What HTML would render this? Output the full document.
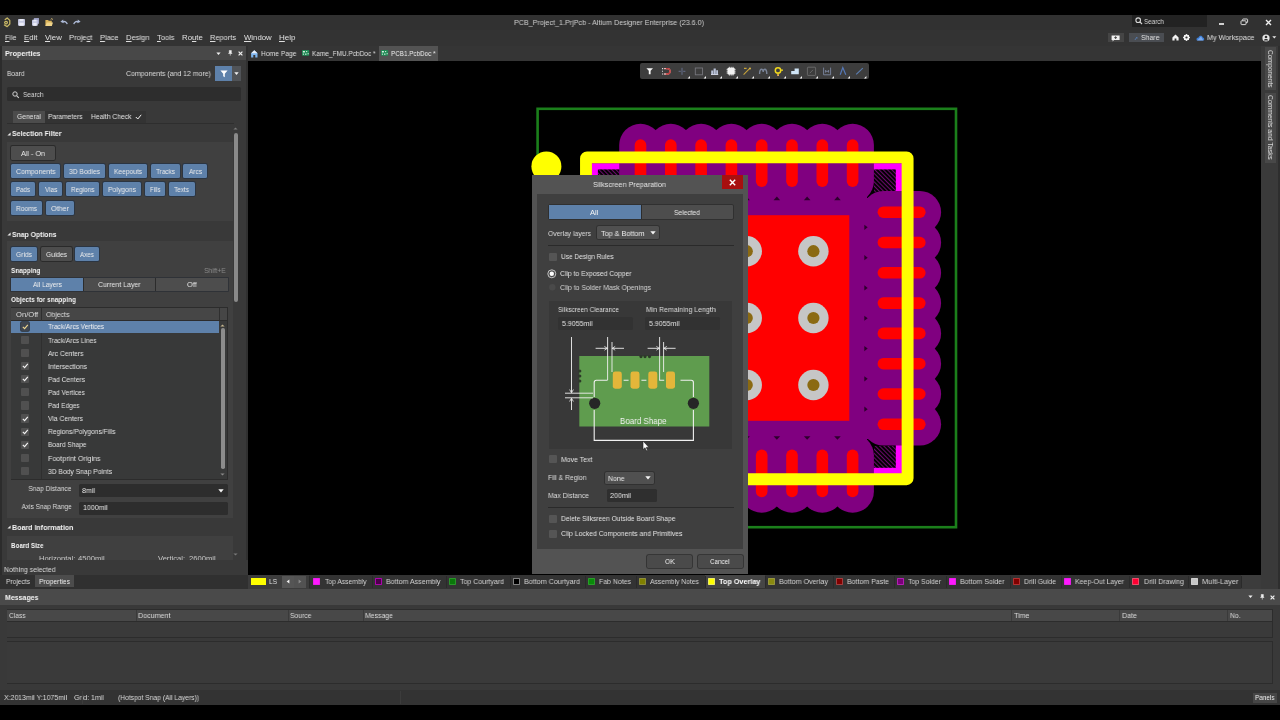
<!DOCTYPE html>
<html><head><meta charset="utf-8"><title>Altium Designer</title>
<style>
html,body{margin:0;padding:0;background:#000;}
body{width:1280px;height:720px;position:relative;overflow:hidden;font-family:"Liberation Sans", sans-serif;}
body>div,body>span,body>svg{position:absolute;display:block;}
.t{white-space:nowrap;line-height:12px;height:12px;will-change:transform;}
.t u{text-decoration-thickness:0.7px;text-underline-offset:0.8px;}
</style></head><body>
<div style="left:0px;top:15px;width:1280px;height:15px;background:#313131;"></div>
<div style="left:0px;top:30px;width:1280px;height:16px;background:#333333;"></div>
<div style="left:248px;top:46px;width:1032px;height:15px;background:#353535;"></div>
<div style="left:1261px;top:46px;width:19px;height:543px;background:#3a3a3a;"></div>
<div style="left:1278px;top:46px;width:2px;height:543px;background:#2e2e2e;"></div>
<div style="left:0px;top:46px;width:248px;height:14px;background:#484848;"></div>
<div style="left:0px;top:60px;width:248px;height:515px;background:#393939;"></div>
<div style="left:0px;top:46px;width:2px;height:529px;background:#2c2c2c;"></div>
<div style="left:245.8px;top:46px;width:2.7px;height:529px;background:#303030;"></div>
<div style="left:248px;top:574.5px;width:1013px;height:14.5px;background:#3c3c3c;"></div>
<div style="left:309px;top:575px;width:932px;height:14px;background:#333333;"></div>
<div style="left:0px;top:575px;width:248px;height:14px;background:#303030;"></div>
<div style="left:0px;top:589px;width:1280px;height:15.5px;background:#4a4a4a;"></div>
<div style="left:0px;top:605px;width:1280px;height:85px;background:#393939;"></div>
<div style="left:0px;top:690px;width:1280px;height:15px;background:#333333;"></div>
<span id="t1" class="t" style="left:514.00px;transform-origin:0 50%;top:16.90px;font-size:7.6px;color:#d0d0d0;transform:scaleX(0.9437);">PCB_Project_1.PrjPcb - Altium Designer Enterprise (23.6.0)</span>
<svg style="left:3px;top:16.5px;" width="9" height="11" viewBox="0 0 9 11"><path d="M2.2 2.6 L4.2 1 L6.8 3.4 V7 L4.2 9.6 L1.4 8 M1.6 5.6 C1.8 4 4.4 4 4.4 5.6 C4.4 7 2.4 7.2 2 6.2" fill="none" stroke="#c9b865" stroke-width="1.25" stroke-linejoin="round" stroke-linecap="round"/></svg>
<svg style="left:18px;top:18.5px;" width="7" height="7" viewBox="0 0 7 7"><rect x="0" y="0" width="7" height="6.8" rx="0.8" fill="#bfc2dc"/><rect x="1.5" y="0" width="4" height="2.2" fill="#e6e8f4"/><rect x="1.2" y="3.6" width="4.6" height="3.2" fill="#ecedf8"/></svg>
<svg style="left:32px;top:18px;" width="7.4" height="8" viewBox="0 0 7.4 8"><rect x="1.8" y="0" width="5.4" height="5.8" rx="0.7" fill="#9a9ec2"/><rect x="0" y="1.8" width="5.8" height="6" rx="0.7" fill="#c3c6e0"/><rect x="1.2" y="4.8" width="3.4" height="3" fill="#ecedf8"/><rect x="1.4" y="1.8" width="3" height="1.6" fill="#e6e8f4"/></svg>
<svg style="left:45px;top:17.5px;" width="9" height="8.4" viewBox="0 0 9 8.4"><path d="M0.4 2 H3 L3.8 2.8 H6.8 V8 H0.4 Z" fill="#d9b25a"/><path d="M0.5 8 L1.8 4.4 H8 L6.8 8 Z" fill="#f0d48a"/><path d="M5.6 1.6 L7 0.4 L7.6 1.8" fill="none" stroke="#e8c878" stroke-width="0.7"/></svg>
<svg style="left:59.5px;top:18.5px;" width="8" height="6" viewBox="0 0 8 6"><path d="M7.2 5.2 C6.8 2.8 4.6 2 2.8 2.8" fill="none" stroke="#aebbd8" stroke-width="1.3"/><path d="M0.4 2.8 L3.2 0.4 L3.6 4.2 Z" fill="#aebbd8"/></svg>
<svg style="left:73px;top:18.5px;" width="8" height="6" viewBox="0 0 8 6"><path d="M0.8 5.2 C1.2 2.8 3.4 2 5.2 2.8" fill="none" stroke="#aebbd8" stroke-width="1.3"/><path d="M7.6 2.8 L4.8 0.4 L4.4 4.2 Z" fill="#aebbd8"/></svg>
<div style="left:1132px;top:15px;width:75px;height:11.6px;background:#222222;"></div>
<svg style="left:1135px;top:17px;" width="8" height="8" viewBox="0 0 8 8"><circle cx="3.2" cy="3.2" r="2.3" fill="none" stroke="#d8d8d8" stroke-width="1.1"/><path d="M4.9 4.9 L7 7" stroke="#d8d8d8" stroke-width="1.2"/></svg>
<span id="t2" class="t" style="left:1143.5px;transform-origin:0 50%;top:15.80px;font-size:7.6px;color:#d8d8d8;transform:scaleX(0.8312);">Search</span>
<div style="left:1219px;top:23.2px;width:4.6px;height:1.6px;background:#d0d0d0;"></div>
<svg style="left:1240px;top:17.5px;" width="9" height="8" viewBox="0 0 9 8"><rect x="2.6" y="1" width="5" height="3.6" rx="0.6" fill="none" stroke="#d8d8d8" stroke-width="1"/><rect x="1" y="2.8" width="5" height="3.8" rx="0.6" fill="#2e2e2e" stroke="#d8d8d8" stroke-width="1"/></svg>
<svg style="left:1264.5px;top:18.5px;" width="7" height="7" viewBox="0 0 7 7"><path d="M1 1 L6 6 M6 1 L1 6" stroke="#f0f0f0" stroke-width="1.4"/></svg>
<span id="t3" class="t" style="left:5px;transform-origin:0 50%;top:32.00px;font-size:7.8px;color:#e0e0e0;transform:scaleX(0.9143);"><u>F</u>ile</span>
<span id="t4" class="t" style="left:24px;transform-origin:0 50%;top:32.00px;font-size:7.8px;color:#e0e0e0;"><u>E</u>dit</span>
<span id="t5" class="t" style="left:45px;transform-origin:0 50%;top:32.00px;font-size:7.8px;color:#e0e0e0;transform:scaleX(0.9842);"><u>V</u>iew</span>
<span id="t6" class="t" style="left:69px;transform-origin:0 50%;top:32.00px;font-size:7.8px;color:#e0e0e0;transform:scaleX(0.9678);">Proje<u>c</u>t</span>
<span id="t7" class="t" style="left:100px;transform-origin:0 50%;top:32.00px;font-size:7.8px;color:#e0e0e0;transform:scaleX(0.9480);"><u>P</u>lace</span>
<span id="t8" class="t" style="left:126px;transform-origin:0 50%;top:32.00px;font-size:7.8px;color:#e0e0e0;transform:scaleX(0.9678);"><u>D</u>esign</span>
<span id="t9" class="t" style="left:157px;transform-origin:0 50%;top:32.00px;font-size:7.8px;color:#e0e0e0;transform:scaleX(0.9605);"><u>T</u>ools</span>
<span id="t10" class="t" style="left:182px;transform-origin:0 50%;top:32.00px;font-size:7.8px;color:#e0e0e0;transform:scaleX(0.9842);">Ro<u>u</u>te</span>
<span id="t11" class="t" style="left:210px;transform-origin:0 50%;top:32.00px;font-size:7.8px;color:#e0e0e0;transform:scaleX(0.9519);"><u>R</u>eports</span>
<span id="t12" class="t" style="left:244px;transform-origin:0 50%;top:32.00px;font-size:7.8px;color:#e0e0e0;transform:scaleX(0.9915);"><u>W</u>indow</span>
<span id="t13" class="t" style="left:279px;transform-origin:0 50%;top:32.00px;font-size:7.8px;color:#e0e0e0;transform:scaleX(1.0282);"><u>H</u>elp</span>
<div style="left:1107.5px;top:33px;width:16.5px;height:9.2px;background:#454545;"></div>
<svg style="left:1111px;top:34.5px;" width="10" height="7" viewBox="0 0 10 7"><path d="M0.6 0.4 H8.6 V5 H3 L1.6 6.4 V5 H0.6 Z" fill="#f0f0f0"/><rect x="4.1" y="1.3" width="1" height="2.6" fill="#454545"/><rect x="3.2" y="2.2" width="2.8" height="0.9" fill="#454545"/></svg>
<div style="left:1129px;top:33px;width:35px;height:9.2px;background:#4a4d52;"></div>
<span id="t14" class="t" style="left:1133.5px;transform-origin:0 50%;top:31.80px;font-size:5px;color:#5b8fd6;">&#10138;</span>
<span id="t15" class="t" style="left:1140.5px;transform-origin:0 50%;top:32.00px;font-size:7.8px;color:#e0e0e0;transform:scaleX(0.8889);">Share</span>
<svg style="left:1171.5px;top:34px;" width="7" height="7" viewBox="0 0 7 7"><path d="M3.5 0.6 L6.6 3.4 V6.4 H4.4 V4.4 H2.6 V6.4 H0.4 V3.4 Z" fill="#f2f2f2"/></svg>
<svg style="left:1183px;top:34px;" width="7" height="7" viewBox="0 0 7 7"><circle cx="3.5" cy="3.5" r="2.1" fill="none" stroke="#f2f2f2" stroke-width="1.6"/><path d="M3.5 0 V7 M0 3.5 H7 M1 1 L6 6 M6 1 L1 6" stroke="#f2f2f2" stroke-width="0.9"/><circle cx="3.5" cy="3.5" r="1.1" fill="#323232"/></svg>
<svg style="left:1196px;top:33.5px;" width="9" height="8" viewBox="0 0 9 8"><path d="M1 6.6 C-0.2 5 1 3.4 2.6 3.6 C3 1.4 6.2 1.2 6.8 3.6 C8.6 3.8 8.6 6.4 7 6.6 Z" fill="#3d7fd9"/><path d="M1 6.6 L5 2.4 L7.4 6.6 Z" fill="#8fb8f0" opacity="0.8"/></svg>
<span id="t16" class="t" style="left:1206.8px;transform-origin:0 50%;top:32.00px;font-size:7.8px;color:#e0e0e0;transform:scaleX(0.9237);">My Workspace</span>
<svg style="left:1262px;top:33.5px;" width="8" height="8" viewBox="0 0 8 8"><circle cx="4" cy="4" r="3.6" fill="#e8e8e8"/><circle cx="4" cy="3" r="1.3" fill="#323232"/><path d="M1.8 6.4 C2.2 4.6 5.8 4.6 6.2 6.4 Z" fill="#323232"/></svg>
<svg style="left:1272px;top:36px;" width="5" height="3" viewBox="0 0 5 3"><path d="M0.3 0.3 H4.3 L2.3 2.6 Z" fill="#e8e8e8"/></svg>
<div style="left:379px;top:46px;width:59px;height:15px;background:#535353;"></div>
<svg style="left:251.2px;top:49.6px;" width="7" height="8" viewBox="0 0 7 8"><path d="M3.3 0.3 L6.5 3.2 V7.4 H4.3 V5 H2.3 V7.4 H0.1 V3.2 Z" fill="#7db4ee"/><path d="M3.3 0.3 L6.5 3.2 H0.1 Z" fill="#e8eef8"/></svg>
<span id="t17" class="t" style="left:261px;transform-origin:0 50%;top:47.80px;font-size:7.8px;color:#e0e0e0;transform:scaleX(0.8619);">Home Page</span>
<svg style="left:301.5px;top:50.4px;" width="8" height="7" viewBox="0 0 8 7"><rect x="0" y="0" width="7.2" height="5.8" rx="0.7" fill="#1f8a55"/><rect x="0.9" y="1" width="2" height="1.5" fill="#d8f0e2"/><rect x="4.1" y="1" width="1.1" height="1.1" fill="#d8f0e2"/><rect x="5.6" y="3.2" width="1.1" height="1.1" fill="#d8f0e2"/><rect x="0.9" y="3.6" width="1.1" height="1.1" fill="#d8f0e2"/><rect x="3" y="3.6" width="1.5" height="1.1" fill="#d8f0e2"/></svg>
<span id="t18" class="t" style="left:311.5px;transform-origin:0 50%;top:47.80px;font-size:7.8px;color:#e0e0e0;transform:scaleX(0.8326);">Kame_FMU.PcbDoc *</span>
<svg style="left:381px;top:50.4px;" width="8" height="7" viewBox="0 0 8 7"><rect x="0" y="0" width="7.2" height="5.8" rx="0.7" fill="#1f8a55"/><rect x="0.9" y="1" width="2" height="1.5" fill="#d8f0e2"/><rect x="4.1" y="1" width="1.1" height="1.1" fill="#d8f0e2"/><rect x="5.6" y="3.2" width="1.1" height="1.1" fill="#d8f0e2"/><rect x="0.9" y="3.6" width="1.1" height="1.1" fill="#d8f0e2"/><rect x="3" y="3.6" width="1.5" height="1.1" fill="#d8f0e2"/></svg>
<span id="t19" class="t" style="left:390.8px;transform-origin:0 50%;top:47.80px;font-size:7.8px;color:#f0f0f0;transform:scaleX(0.8084);">PCB1.PcbDoc *</span>
<div style="left:1265px;top:47px;width:11.3px;height:42.5px;background:#484848;"></div>
<div style="left:1265px;top:92.5px;width:11.3px;height:70px;background:#484848;"></div>
<span id="t20" class="t" style="left:1275.5px;top:49.5px;font-size:7.8px;color:#e0e0e0;transform-origin:0 0;transform:rotate(90deg) scaleX(0.8481);">Components</span>
<span id="t21" class="t" style="left:1275.5px;top:95px;font-size:7.8px;color:#e0e0e0;transform-origin:0 0;transform:rotate(90deg) scaleX(0.8620);">Comments and Tasks</span>
<span id="t22" class="t" style="left:5px;transform-origin:0 50%;top:47.60px;font-size:8px;color:#f2f2f2;font-weight:bold;transform:scaleX(0.8970);">Properties</span>
<svg style="left:216px;top:51.5px;" width="6" height="4" viewBox="0 0 6 4"><path d="M0.4 0.4 H4.6 L2.5 3 Z" fill="#f0f0f0"/></svg>
<svg style="left:228px;top:50.3px;" width="5" height="7" viewBox="0 0 5 7"><path d="M1.3 0.4 H3.3 V2.6 L4 3.4 H0.6 L1.3 2.6 Z M2.3 3.4 V5.6" fill="#f0f0f0" stroke="#f0f0f0" stroke-width="0.6"/></svg>
<svg style="left:237.5px;top:51px;" width="5" height="5" viewBox="0 0 5 5"><path d="M0.6 0.6 L4.4 4.4 M4.4 0.6 L0.6 4.4" stroke="#f0f0f0" stroke-width="1.2"/></svg>
<span id="t23" class="t" style="left:6.5px;transform-origin:0 50%;top:68.10px;font-size:7.6px;color:#dedede;transform:scaleX(0.8635);">Board</span>
<span id="t24" class="t" style="left:126px;transform-origin:0 50%;top:68.10px;font-size:7.6px;color:#dedede;transform:scaleX(0.9152);">Components (and 12 more)</span>
<div style="left:215px;top:66px;width:17px;height:15px;background:#5e81aa;"></div>
<div style="left:232px;top:66px;width:8.5px;height:15px;background:#505357;"></div>
<svg style="left:219.5px;top:69.5px;" width="8" height="8" viewBox="0 0 8 8"><path d="M0.4 0.6 H7.6 L4.8 3.8 V7.2 L3.2 6.2 V3.8 Z" fill="#ffffff"/></svg>
<svg style="left:234px;top:72px;" width="5" height="3.4" viewBox="0 0 5 3.4"><path d="M0.3 0.3 H4.7 L2.5 3 Z" fill="#f0f0f0"/></svg>
<div style="left:7px;top:87px;width:234px;height:14px;background:#2d2d2d;border-radius:1.5px;"></div>
<svg style="left:11.5px;top:90.5px;" width="8" height="8" viewBox="0 0 8 8"><circle cx="3" cy="3" r="2.2" fill="none" stroke="#d0d0d0" stroke-width="1"/><path d="M4.6 4.6 L6.8 6.8" stroke="#d0d0d0" stroke-width="1.1"/></svg>
<span id="t25" class="t" style="left:22.5px;transform-origin:0 50%;top:88.90px;font-size:7.6px;color:#d8d8d8;transform:scaleX(0.8519);">Search</span>
<div style="left:13px;top:110.5px;width:133px;height:12.5px;background:#333333;"></div>
<div style="left:13px;top:110.5px;width:31.5px;height:12.5px;background:#4c4c4c;"></div>
<span id="t26" class="t" style="left:16.5px;transform-origin:0 50%;top:111.40px;font-size:7.6px;color:#e4e4e4;transform:scaleX(0.8879);">General</span>
<span id="t27" class="t" style="left:48px;transform-origin:0 50%;top:111.40px;font-size:7.6px;color:#e4e4e4;transform:scaleX(0.8790);">Parameters</span>
<span id="t28" class="t" style="left:91px;transform-origin:0 50%;top:111.40px;font-size:7.6px;color:#e4e4e4;transform:scaleX(0.8883);">Health Check</span>
<svg style="left:134.5px;top:113.5px;" width="7" height="6" viewBox="0 0 7 6"><path d="M0.8 3 L2.8 5 L6.2 0.8" fill="none" stroke="#f0f0f0" stroke-width="1"/></svg>
<div style="left:7px;top:123px;width:227px;height:1px;background:#2e2e2e;"></div>
<div style="left:234px;top:133px;width:3.8px;height:169px;background:#8a8a8a;border-radius:2px;"></div>
<svg style="left:233.4px;top:127.2px;" width="5" height="3" viewBox="0 0 5 3"><path d="M0.4 2.6 L2.5 0.4 L4.6 2.6 Z" fill="#7a7a7a"/></svg>
<svg style="left:233.4px;top:552.5px;" width="5" height="3" viewBox="0 0 5 3"><path d="M0.4 0.4 L2.5 2.6 L4.6 0.4 Z" fill="#7a7a7a"/></svg>
<svg style="left:6.5px;top:131.6px;" width="4" height="4" viewBox="0 0 4 4"><path d="M3.6 0.4 V3.6 H0.4 Z" fill="#e8e8e8"/></svg>
<span id="t29" class="t" style="left:12px;transform-origin:0 50%;top:128.20px;font-size:7.8px;color:#f4f4f4;font-weight:bold;transform:scaleX(0.8854);">Selection Filter</span>
<div style="left:7px;top:142px;width:226px;height:78.5px;background:#404040;"></div>
<div style="left:11.1px;top:145.8px;width:43.6px;height:14.4px;background:#4d4d4d;border-radius:1.5px;box-shadow:0 0 0 0.9px #2a2a2a;"></div>
<span id="t30" class="t" style="left:21.00px;transform-origin:0 50%;top:147.80px;font-size:7.6px;color:#ececec;transform:scaleX(0.9476);">All - On</span>
<div style="left:11.1px;top:164.10000000000002px;width:49.1px;height:14.1px;background:#5e81aa;border-radius:1.5px;box-shadow:0 0 0 0.9px #2b3542;"></div>
<span id="t31" class="t" style="left:16.00px;transform-origin:0 50%;top:165.95px;font-size:7.6px;color:#ececec;transform:scaleX(0.9173);">Components</span>
<div style="left:63.6px;top:164.10000000000002px;width:41.6px;height:14.1px;background:#5e81aa;border-radius:1.5px;box-shadow:0 0 0 0.9px #2b3542;"></div>
<span id="t32" class="t" style="left:69.00px;transform-origin:0 50%;top:165.95px;font-size:7.6px;color:#ececec;transform:scaleX(0.8845);">3D Bodies</span>
<div style="left:108.6px;top:164.10000000000002px;width:38.6px;height:14.1px;background:#5e81aa;border-radius:1.5px;box-shadow:0 0 0 0.9px #2b3542;"></div>
<span id="t33" class="t" style="left:114.00px;transform-origin:0 50%;top:165.95px;font-size:7.6px;color:#ececec;transform:scaleX(0.8724);">Keepouts</span>
<div style="left:150.6px;top:164.10000000000002px;width:29.6px;height:14.1px;background:#5e81aa;border-radius:1.5px;box-shadow:0 0 0 0.9px #2b3542;"></div>
<span id="t34" class="t" style="left:156.00px;transform-origin:0 50%;top:165.95px;font-size:7.6px;color:#ececec;transform:scaleX(0.8444);">Tracks</span>
<div style="left:183.1px;top:164.10000000000002px;width:23.6px;height:14.1px;background:#5e81aa;border-radius:1.5px;box-shadow:0 0 0 0.9px #2b3542;"></div>
<span id="t35" class="t" style="left:188.50px;transform-origin:0 50%;top:165.95px;font-size:7.6px;color:#ececec;transform:scaleX(0.8560);">Arcs</span>
<div style="left:11.1px;top:182.4px;width:24.1px;height:14.1px;background:#5e81aa;border-radius:1.5px;box-shadow:0 0 0 0.9px #2b3542;"></div>
<span id="t36" class="t" style="left:16.25px;transform-origin:0 50%;top:184.25px;font-size:7.6px;color:#ececec;transform:scaleX(0.8087);">Pads</span>
<div style="left:39.1px;top:182.4px;width:23.1px;height:14.1px;background:#5e81aa;border-radius:1.5px;box-shadow:0 0 0 0.9px #2b3542;"></div>
<span id="t37" class="t" style="left:44.50px;transform-origin:0 50%;top:184.25px;font-size:7.6px;color:#ececec;transform:scaleX(0.8538);">Vias</span>
<div style="left:65.6px;top:182.4px;width:33.6px;height:14.1px;background:#5e81aa;border-radius:1.5px;box-shadow:0 0 0 0.9px #2b3542;"></div>
<span id="t38" class="t" style="left:70.75px;transform-origin:0 50%;top:184.25px;font-size:7.6px;color:#ececec;transform:scaleX(0.8430);">Regions</span>
<div style="left:102.6px;top:182.4px;width:38.6px;height:14.1px;background:#5e81aa;border-radius:1.5px;box-shadow:0 0 0 0.9px #2b3542;"></div>
<span id="t39" class="t" style="left:108.00px;transform-origin:0 50%;top:184.25px;font-size:7.6px;color:#ececec;transform:scaleX(0.8960);">Polygons</span>
<div style="left:144.6px;top:182.4px;width:20.6px;height:14.1px;background:#5e81aa;border-radius:1.5px;box-shadow:0 0 0 0.9px #2b3542;"></div>
<span id="t40" class="t" style="left:149.75px;transform-origin:0 50%;top:184.25px;font-size:7.6px;color:#ececec;transform:scaleX(0.7778);">Fills</span>
<div style="left:168.6px;top:182.4px;width:26.1px;height:14.1px;background:#5e81aa;border-radius:1.5px;box-shadow:0 0 0 0.9px #2b3542;"></div>
<span id="t41" class="t" style="left:174.25px;transform-origin:0 50%;top:184.25px;font-size:7.6px;color:#ececec;transform:scaleX(0.8458);">Texts</span>
<div style="left:11.1px;top:200.8px;width:31.1px;height:14.1px;background:#5e81aa;border-radius:1.5px;box-shadow:0 0 0 0.9px #2b3542;"></div>
<span id="t42" class="t" style="left:16.25px;transform-origin:0 50%;top:202.65px;font-size:7.6px;color:#ececec;transform:scaleX(0.8727);">Rooms</span>
<div style="left:45.6px;top:200.8px;width:28.6px;height:14.1px;background:#5e81aa;border-radius:1.5px;box-shadow:0 0 0 0.9px #2b3542;"></div>
<span id="t43" class="t" style="left:51.00px;transform-origin:0 50%;top:202.65px;font-size:7.6px;color:#ececec;transform:scaleX(0.9474);">Other</span>
<svg style="left:6.5px;top:232px;" width="4" height="4" viewBox="0 0 4 4"><path d="M3.6 0.4 V3.6 H0.4 Z" fill="#e8e8e8"/></svg>
<span id="t44" class="t" style="left:12px;transform-origin:0 50%;top:228.60px;font-size:7.8px;color:#f4f4f4;font-weight:bold;transform:scaleX(0.8779);">Snap Options</span>
<div style="left:7px;top:241px;width:226px;height:277px;background:#404040;"></div>
<div style="left:11.1px;top:247.10000000000002px;width:26.1px;height:14.1px;background:#5e81aa;border-radius:1.5px;box-shadow:0 0 0 0.9px #2b3542;"></div>
<span id="t45" class="t" style="left:16.25px;transform-origin:0 50%;top:248.95px;font-size:7.6px;color:#ececec;transform:scaleX(0.8812);">Grids</span>
<div style="left:40.6px;top:247.10000000000002px;width:31.1px;height:14.1px;background:#4d4d4d;border-radius:1.5px;box-shadow:0 0 0 0.9px #2a2a2a;"></div>
<span id="t46" class="t" style="left:45.75px;transform-origin:0 50%;top:248.95px;font-size:7.6px;color:#ececec;transform:scaleX(0.8727);">Guides</span>
<div style="left:75.1px;top:247.10000000000002px;width:24.1px;height:14.1px;background:#5e81aa;border-radius:1.5px;box-shadow:0 0 0 0.9px #2b3542;"></div>
<span id="t47" class="t" style="left:80.25px;transform-origin:0 50%;top:248.95px;font-size:7.6px;color:#ececec;transform:scaleX(0.8289);">Axes</span>
<span id="t48" class="t" style="left:10.5px;transform-origin:0 50%;top:264.90px;font-size:7.8px;color:#f4f4f4;font-weight:bold;transform:scaleX(0.8303);">Snapping</span>
<span id="t49" class="t" style="right:1054.2px;transform-origin:100% 50%;top:264.90px;font-size:7.6px;color:#8c8c8c;transform:scaleX(0.8703);">Shift+E</span>
<div style="left:11px;top:278px;width:216.5px;height:13.3px;background:#4d4d4d;box-shadow:0 0 0 0.8px #2c3036;"></div>
<div style="left:11px;top:278px;width:72px;height:13.3px;background:#5e81aa;"></div>
<div style="left:83px;top:278px;width:0.8px;height:13.3px;background:#2c2c2c;"></div>
<div style="left:155.3px;top:278px;width:0.8px;height:13.3px;background:#2c2c2c;"></div>
<span id="t50" class="t" style="left:32.50px;transform-origin:0 50%;top:279.40px;font-size:7.6px;color:#f0f0f0;transform:scaleX(0.8697);">All Layers</span>
<span id="t51" class="t" style="left:98.05px;transform-origin:0 50%;top:279.40px;font-size:7.6px;color:#e8e8e8;transform:scaleX(0.9152);">Current Layer</span>
<span id="t52" class="t" style="left:186.55px;transform-origin:0 50%;top:279.40px;font-size:7.6px;color:#e8e8e8;transform:scaleX(0.9500);">Off</span>
<span id="t53" class="t" style="left:10.5px;transform-origin:0 50%;top:294.30px;font-size:7.8px;color:#f4f4f4;font-weight:bold;transform:scaleX(0.8335);">Objects for snapping</span>
<div style="left:10.5px;top:307px;width:217px;height:172.8px;background:#2c2c2c;"></div>
<div style="left:11.3px;top:307.8px;width:215.4px;height:12.4px;background:#464646;"></div>
<div style="left:11.3px;top:320.8px;width:215.4px;height:158.2px;background:#383939;"></div>
<div style="left:41px;top:307.8px;width:0.8px;height:171.2px;background:#2f2f2f;"></div>
<div style="left:218.6px;top:307.8px;width:0.8px;height:12.4px;background:#2f2f2f;"></div>
<span id="t54" class="t" style="left:16px;transform-origin:0 50%;top:308.80px;font-size:7.6px;color:#dcdcdc;transform:scaleX(0.9895);">On/Off</span>
<span id="t55" class="t" style="left:46px;transform-origin:0 50%;top:308.80px;font-size:7.6px;color:#dcdcdc;transform:scaleX(0.9126);">Objects</span>
<div style="left:11.3px;top:320.8px;width:207.3px;height:12.4px;background:#5e81aa;"></div>
<div style="left:20.5px;top:322.2px;width:8.6px;height:8.8px;background:#3f4650;box-shadow:0 0 0 0.8px #2a3038;border-radius:1px;"></div>
<svg style="left:21.8px;top:323.8px;" width="7" height="6" viewBox="0 0 7 6"><path d="M0.8 2.8 L2.6 4.6 L5.8 0.8" fill="none" stroke="#f0d890" stroke-width="1.1"/></svg>
<span id="t56" class="t" style="left:48.3px;transform-origin:0 50%;top:321.40px;font-size:7.6px;color:#f4f4f4;transform:scaleX(0.8599);">Track/Arcs Vertices</span>
<div style="left:21px;top:335.72px;width:8px;height:8.2px;background:#505050;border-radius:1px;"></div>
<span id="t57" class="t" style="left:48.3px;transform-origin:0 50%;top:334.52px;font-size:7.6px;color:#e4e4e4;transform:scaleX(0.8620);">Track/Arcs Lines</span>
<div style="left:21px;top:348.84000000000003px;width:8px;height:8.2px;background:#505050;border-radius:1px;"></div>
<span id="t58" class="t" style="left:48.3px;transform-origin:0 50%;top:347.64px;font-size:7.6px;color:#e4e4e4;transform:scaleX(0.8854);">Arc Centers</span>
<div style="left:21px;top:361.96000000000004px;width:8px;height:8.2px;background:#505050;border-radius:1px;"></div>
<svg style="left:21.8px;top:363.16px;" width="7" height="6" viewBox="0 0 7 6"><path d="M0.8 2.8 L2.6 4.6 L5.8 0.8" fill="none" stroke="#f4f4f4" stroke-width="1.1"/></svg>
<span id="t59" class="t" style="left:48.3px;transform-origin:0 50%;top:360.76px;font-size:7.6px;color:#e4e4e4;transform:scaleX(0.9057);">Intersections</span>
<div style="left:21px;top:375.08000000000004px;width:8px;height:8.2px;background:#505050;border-radius:1px;"></div>
<svg style="left:21.8px;top:376.28000000000003px;" width="7" height="6" viewBox="0 0 7 6"><path d="M0.8 2.8 L2.6 4.6 L5.8 0.8" fill="none" stroke="#f4f4f4" stroke-width="1.1"/></svg>
<span id="t60" class="t" style="left:48.3px;transform-origin:0 50%;top:373.88px;font-size:7.6px;color:#e4e4e4;transform:scaleX(0.8764);">Pad Centers</span>
<div style="left:21px;top:388.2px;width:8px;height:8.2px;background:#505050;border-radius:1px;"></div>
<span id="t61" class="t" style="left:48.3px;transform-origin:0 50%;top:387.00px;font-size:7.6px;color:#e4e4e4;transform:scaleX(0.8677);">Pad Vertices</span>
<div style="left:21px;top:401.32px;width:8px;height:8.2px;background:#505050;border-radius:1px;"></div>
<span id="t62" class="t" style="left:48.3px;transform-origin:0 50%;top:400.12px;font-size:7.6px;color:#e4e4e4;transform:scaleX(0.8478);">Pad Edges</span>
<div style="left:21px;top:414.44px;width:8px;height:8.2px;background:#505050;border-radius:1px;"></div>
<svg style="left:21.8px;top:415.64px;" width="7" height="6" viewBox="0 0 7 6"><path d="M0.8 2.8 L2.6 4.6 L5.8 0.8" fill="none" stroke="#f4f4f4" stroke-width="1.1"/></svg>
<span id="t63" class="t" style="left:48.3px;transform-origin:0 50%;top:413.24px;font-size:7.6px;color:#e4e4e4;transform:scaleX(0.8850);">Via Centers</span>
<div style="left:21px;top:427.56px;width:8px;height:8.2px;background:#505050;border-radius:1px;"></div>
<svg style="left:21.8px;top:428.76px;" width="7" height="6" viewBox="0 0 7 6"><path d="M0.8 2.8 L2.6 4.6 L5.8 0.8" fill="none" stroke="#f4f4f4" stroke-width="1.1"/></svg>
<span id="t64" class="t" style="left:48.3px;transform-origin:0 50%;top:426.36px;font-size:7.6px;color:#e4e4e4;transform:scaleX(0.8786);">Regions/Polygons/Fills</span>
<div style="left:21px;top:440.68px;width:8px;height:8.2px;background:#505050;border-radius:1px;"></div>
<svg style="left:21.8px;top:441.88px;" width="7" height="6" viewBox="0 0 7 6"><path d="M0.8 2.8 L2.6 4.6 L5.8 0.8" fill="none" stroke="#f4f4f4" stroke-width="1.1"/></svg>
<span id="t65" class="t" style="left:48.3px;transform-origin:0 50%;top:439.48px;font-size:7.6px;color:#e4e4e4;transform:scaleX(0.8682);">Board Shape</span>
<div style="left:21px;top:453.8px;width:8px;height:8.2px;background:#505050;border-radius:1px;"></div>
<span id="t66" class="t" style="left:48.3px;transform-origin:0 50%;top:452.60px;font-size:7.6px;color:#e4e4e4;transform:scaleX(0.9352);">Footprint Origins</span>
<div style="left:21px;top:466.92px;width:8px;height:8.2px;background:#505050;border-radius:1px;"></div>
<span id="t67" class="t" style="left:48.3px;transform-origin:0 50%;top:465.72px;font-size:7.6px;color:#e4e4e4;transform:scaleX(0.8866);">3D Body Snap Points</span>
<div style="left:221px;top:328px;width:3.6px;height:141px;background:#8c8c8c;border-radius:1.8px;"></div>
<svg style="left:220.3px;top:323.5px;" width="5" height="3" viewBox="0 0 5 3"><path d="M0.4 2.6 L2.5 0.4 L4.6 2.6 Z" fill="#c8b890"/></svg>
<svg style="left:220.3px;top:472.5px;" width="5" height="3" viewBox="0 0 5 3"><path d="M0.4 0.4 L2.5 2.6 L4.6 0.4 Z" fill="#8a8a8a"/></svg>
<span id="t68" class="t" style="right:1208.3px;transform-origin:100% 50%;top:483.40px;font-size:7.6px;color:#dedede;transform:scaleX(0.8706);">Snap Distance</span>
<div style="left:79px;top:483.7px;width:149px;height:13.8px;background:#2d2d2d;border-radius:1.5px;"></div>
<span id="t69" class="t" style="left:81.5px;transform-origin:0 50%;top:484.80px;font-size:7.6px;color:#e8e8e8;transform:scaleX(0.9327);">8mil</span>
<svg style="left:218px;top:489px;" width="6" height="4" viewBox="0 0 6 4"><path d="M0.3 0.3 H5.7 L3 3.4 Z" fill="#f4f4f4"/></svg>
<span id="t70" class="t" style="right:1208.3px;transform-origin:100% 50%;top:500.60px;font-size:7.6px;color:#dedede;transform:scaleX(0.8520);">Axis Snap Range</span>
<div style="left:79px;top:501.8px;width:149px;height:13.3px;background:#2d2d2d;border-radius:1.5px;"></div>
<span id="t71" class="t" style="left:83px;transform-origin:0 50%;top:501.90px;font-size:7.6px;color:#e8e8e8;transform:scaleX(0.9213);">1000mil</span>
<svg style="left:6.5px;top:525.2px;" width="4" height="4" viewBox="0 0 4 4"><path d="M3.6 0.4 V3.6 H0.4 Z" fill="#e8e8e8"/></svg>
<span id="t72" class="t" style="left:12px;transform-origin:0 50%;top:521.80px;font-size:7.8px;color:#f4f4f4;font-weight:bold;transform:scaleX(0.9101);">Board Information</span>
<div style="left:7px;top:536.4px;width:226px;height:26.6px;background:#404040;"></div>
<span id="t73" class="t" style="left:10.5px;transform-origin:0 50%;top:540.00px;font-size:7.8px;color:#f4f4f4;font-weight:bold;transform:scaleX(0.8065);">Board Size</span>
<div style="left:7px;top:553px;width:226px;height:7.2px;overflow:hidden;"><span class="t" style="position:absolute;left:31.5px;top:-0.2px;font-size:7.6px;color:#c8c8c8;">Horizontal:</span><span class="t" style="position:absolute;left:71px;top:-0.2px;font-size:7.6px;color:#c8c8c8;">4500mil</span><span class="t" style="position:absolute;left:150.5px;top:-0.2px;font-size:7.6px;color:#c8c8c8;">Vertical:</span><span class="t" style="position:absolute;left:181.5px;top:-0.2px;font-size:7.6px;color:#c8c8c8;">2600mil</span></div>
<div style="left:0px;top:560.2px;width:248px;height:14.8px;background:#393939;"></div>
<div style="left:0px;top:560.2px;width:2px;height:14.8px;background:#2c2c2c;"></div>
<span id="t74" class="t" style="left:3.5px;transform-origin:0 50%;top:564.00px;font-size:7.8px;color:#dcdcdc;transform:scaleX(0.8865);">Nothing selected</span>
<div style="left:35px;top:575px;width:38.5px;height:12.3px;background:#4c4c4c;"></div>
<span id="t75" class="t" style="left:6px;transform-origin:0 50%;top:575.90px;font-size:7.8px;color:#dcdcdc;transform:scaleX(0.8519);">Projects</span>
<span id="t76" class="t" style="left:38.8px;transform-origin:0 50%;top:575.90px;font-size:7.8px;color:#f0f0f0;transform:scaleX(0.8721);">Properties</span>
<div style="left:250.8px;top:577.6px;width:15.4px;height:7.5px;background:#ffff00;"></div>
<span id="t77" class="t" style="left:269px;transform-origin:0 50%;top:576.20px;font-size:7.6px;color:#e0e0e0;transform:scaleX(0.8605);">LS</span>
<div style="left:281.7px;top:576px;width:12px;height:11.8px;background:#555555;"></div>
<div style="left:294.3px;top:576px;width:11.7px;height:11.8px;background:#525252;"></div>
<svg style="left:285.5px;top:579px;" width="4" height="5" viewBox="0 0 4 5"><path d="M3.4 0.4 V4.6 L0.6 2.5 Z" fill="#f0f0f0"/></svg>
<svg style="left:297.8px;top:579px;" width="4" height="5" viewBox="0 0 4 5"><path d="M0.6 0.4 V4.6 L3.4 2.5 Z" fill="#8a8a8a"/></svg>
<div style="left:704.5px;top:575px;width:60.5px;height:13px;background:#454545;"></div>
<div style="left:313.6px;top:578.9px;width:5.2px;height:5.2px;background:#ff19ff;box-shadow:0 0 0 0.9px #ff19ff;"></div>
<span id="t78" class="t" style="left:325.3px;transform-origin:0 50%;top:576.20px;font-size:7.6px;color:#d4d4d4;transform:scaleX(0.8856);">Top Assembly</span>
<div style="left:375.6px;top:578.9px;width:5.2px;height:5.2px;background:#4a004a;box-shadow:0 0 0 0.9px #b800b8;"></div>
<span id="t79" class="t" style="left:386px;transform-origin:0 50%;top:576.20px;font-size:7.6px;color:#d4d4d4;transform:scaleX(0.9289);">Bottom Assembly</span>
<div style="left:449.6px;top:578.9px;width:5.2px;height:5.2px;background:#0a780a;box-shadow:0 0 0 0.9px #2aa02a;"></div>
<span id="t80" class="t" style="left:460px;transform-origin:0 50%;top:576.20px;font-size:7.6px;color:#d4d4d4;transform:scaleX(0.9224);">Top Courtyard</span>
<div style="left:513.6px;top:578.9px;width:5.2px;height:5.2px;background:#000000;box-shadow:0 0 0 0.9px #8a8a8a;"></div>
<span id="t81" class="t" style="left:524px;transform-origin:0 50%;top:576.20px;font-size:7.6px;color:#d4d4d4;transform:scaleX(0.9409);">Bottom Courtyard</span>
<div style="left:588.6px;top:578.9px;width:5.2px;height:5.2px;background:#0a8a0a;box-shadow:0 0 0 0.9px #2aa82a;"></div>
<span id="t82" class="t" style="left:599px;transform-origin:0 50%;top:576.20px;font-size:7.6px;color:#d4d4d4;transform:scaleX(0.9131);">Fab Notes</span>
<div style="left:639.6px;top:578.9px;width:5.2px;height:5.2px;background:#808000;box-shadow:0 0 0 0.9px #98983a;"></div>
<span id="t83" class="t" style="left:650px;transform-origin:0 50%;top:576.20px;font-size:7.6px;color:#d4d4d4;transform:scaleX(0.8929);">Assembly Notes</span>
<div style="left:708.6px;top:578.9px;width:5.2px;height:5.2px;background:#ffff00;box-shadow:0 0 0 0.9px #ffff66;"></div>
<span id="t84" class="t" style="left:719px;transform-origin:0 50%;top:576.20px;font-size:7.6px;color:#ffffff;font-weight:bold;transform:scaleX(0.9578);">Top Overlay</span>
<div style="left:768.6px;top:578.9px;width:5.2px;height:5.2px;background:#8a8a10;box-shadow:0 0 0 0.9px #a0a040;"></div>
<span id="t85" class="t" style="left:779px;transform-origin:0 50%;top:576.20px;font-size:7.6px;color:#d4d4d4;transform:scaleX(0.9361);">Bottom Overlay</span>
<div style="left:836.6px;top:578.9px;width:5.2px;height:5.2px;background:#800000;box-shadow:0 0 0 0.9px #b04040;"></div>
<span id="t86" class="t" style="left:847px;transform-origin:0 50%;top:576.20px;font-size:7.6px;color:#d4d4d4;transform:scaleX(0.9212);">Bottom Paste</span>
<div style="left:897.6px;top:578.9px;width:5.2px;height:5.2px;background:#7a007a;box-shadow:0 0 0 0.9px #c020c0;"></div>
<span id="t87" class="t" style="left:908px;transform-origin:0 50%;top:576.20px;font-size:7.6px;color:#d4d4d4;transform:scaleX(0.9088);">Top Solder</span>
<div style="left:949.6px;top:578.9px;width:5.2px;height:5.2px;background:#ff19ff;box-shadow:0 0 0 0.9px #ff19ff;"></div>
<span id="t88" class="t" style="left:960px;transform-origin:0 50%;top:576.20px;font-size:7.6px;color:#d4d4d4;transform:scaleX(0.9247);">Bottom Solder</span>
<div style="left:1013.6px;top:578.9px;width:5.2px;height:5.2px;background:#800000;box-shadow:0 0 0 0.9px #c03030;"></div>
<span id="t89" class="t" style="left:1024px;transform-origin:0 50%;top:576.20px;font-size:7.6px;color:#d4d4d4;transform:scaleX(0.9026);">Drill Guide</span>
<div style="left:1064.6px;top:578.9px;width:5.2px;height:5.2px;background:#ff19ff;box-shadow:0 0 0 0.9px #ff19ff;"></div>
<span id="t90" class="t" style="left:1075px;transform-origin:0 50%;top:576.20px;font-size:7.6px;color:#d4d4d4;transform:scaleX(0.9140);">Keep-Out Layer</span>
<div style="left:1133.1px;top:578.9px;width:5.2px;height:5.2px;background:#ff0033;box-shadow:0 0 0 0.9px #ff5070;"></div>
<span id="t91" class="t" style="left:1143.5px;transform-origin:0 50%;top:576.20px;font-size:7.6px;color:#d4d4d4;transform:scaleX(0.9292);">Drill Drawing</span>
<div style="left:1191.6px;top:578.9px;width:5.2px;height:5.2px;background:#c8c8c8;box-shadow:0 0 0 0.9px #e0e0e0;"></div>
<span id="t92" class="t" style="left:1202px;transform-origin:0 50%;top:576.20px;font-size:7.6px;color:#d4d4d4;transform:scaleX(0.9717);">Multi-Layer</span>
<div style="left:309px;top:576px;width:0.8px;height:11.5px;background:#2a2a2a;"></div>
<div style="left:372px;top:576px;width:0.8px;height:11.5px;background:#2a2a2a;"></div>
<div style="left:446px;top:576px;width:0.8px;height:11.5px;background:#2a2a2a;"></div>
<div style="left:510px;top:576px;width:0.8px;height:11.5px;background:#2a2a2a;"></div>
<div style="left:585px;top:576px;width:0.8px;height:11.5px;background:#2a2a2a;"></div>
<div style="left:636px;top:576px;width:0.8px;height:11.5px;background:#2a2a2a;"></div>
<div style="left:704.5px;top:576px;width:0.8px;height:11.5px;background:#2a2a2a;"></div>
<div style="left:765px;top:576px;width:0.8px;height:11.5px;background:#2a2a2a;"></div>
<div style="left:833px;top:576px;width:0.8px;height:11.5px;background:#2a2a2a;"></div>
<div style="left:894px;top:576px;width:0.8px;height:11.5px;background:#2a2a2a;"></div>
<div style="left:946px;top:576px;width:0.8px;height:11.5px;background:#2a2a2a;"></div>
<div style="left:1010px;top:576px;width:0.8px;height:11.5px;background:#2a2a2a;"></div>
<div style="left:1061px;top:576px;width:0.8px;height:11.5px;background:#2a2a2a;"></div>
<div style="left:1129px;top:576px;width:0.8px;height:11.5px;background:#2a2a2a;"></div>
<div style="left:1188px;top:576px;width:0.8px;height:11.5px;background:#2a2a2a;"></div>
<div style="left:1241px;top:576px;width:0.8px;height:11.5px;background:#2a2a2a;"></div>
<span id="t93" class="t" style="left:5px;transform-origin:0 50%;top:591.80px;font-size:8px;color:#f4f4f4;font-weight:bold;transform:scaleX(0.8758);">Messages</span>
<svg style="left:1248px;top:595px;" width="6" height="4" viewBox="0 0 6 4"><path d="M0.4 0.4 H4.6 L2.5 3 Z" fill="#f0f0f0"/></svg>
<svg style="left:1259.5px;top:594.3px;" width="5" height="7" viewBox="0 0 5 7"><path d="M1.3 0.4 H3.3 V2.6 L4 3.4 H0.6 L1.3 2.6 Z M2.3 3.4 V5.6" fill="#f0f0f0" stroke="#f0f0f0" stroke-width="0.6"/></svg>
<svg style="left:1269.5px;top:595px;" width="5" height="5" viewBox="0 0 5 5"><path d="M0.6 0.6 L4.4 4.4 M4.4 0.6 L0.6 4.4" stroke="#f0f0f0" stroke-width="1.2"/></svg>
<div style="left:6.5px;top:609px;width:1266.5px;height:28.8px;background:#2c2c2c;"></div>
<div style="left:7.3px;top:609.8px;width:1264.9px;height:11.2px;background:#484848;"></div>
<div style="left:7.3px;top:621.6px;width:1264.9px;height:15.4px;background:#3a3a3a;"></div>
<div style="left:6.5px;top:640.8px;width:1266.5px;height:42.9px;background:#2c2c2c;"></div>
<div style="left:7.3px;top:641.6px;width:1264.9px;height:41.3px;background:#3a3a3a;"></div>
<div style="left:136px;top:609.8px;width:0.8px;height:11.2px;background:#3a3a3a;"></div>
<div style="left:288px;top:609.8px;width:0.8px;height:11.2px;background:#3a3a3a;"></div>
<div style="left:363px;top:609.8px;width:0.8px;height:11.2px;background:#3a3a3a;"></div>
<div style="left:1011px;top:609.8px;width:0.8px;height:11.2px;background:#3a3a3a;"></div>
<div style="left:1119px;top:609.8px;width:0.8px;height:11.2px;background:#3a3a3a;"></div>
<div style="left:1227px;top:609.8px;width:0.8px;height:11.2px;background:#3a3a3a;"></div>
<span id="t94" class="t" style="left:9px;transform-origin:0 50%;top:610.20px;font-size:7.6px;color:#dcdcdc;transform:scaleX(0.8684);">Class</span>
<span id="t95" class="t" style="left:138px;transform-origin:0 50%;top:610.20px;font-size:7.6px;color:#dcdcdc;transform:scaleX(0.9386);">Document</span>
<span id="t96" class="t" style="left:289.5px;transform-origin:0 50%;top:610.20px;font-size:7.6px;color:#dcdcdc;transform:scaleX(0.8935);">Source</span>
<span id="t97" class="t" style="left:365px;transform-origin:0 50%;top:610.20px;font-size:7.6px;color:#dcdcdc;transform:scaleX(0.9083);">Message</span>
<span id="t98" class="t" style="left:1014px;transform-origin:0 50%;top:610.20px;font-size:7.6px;color:#dcdcdc;transform:scaleX(0.9341);">Time</span>
<span id="t99" class="t" style="left:1122px;transform-origin:0 50%;top:610.20px;font-size:7.6px;color:#dcdcdc;transform:scaleX(0.9348);">Date</span>
<span id="t100" class="t" style="left:1230px;transform-origin:0 50%;top:610.20px;font-size:7.6px;color:#dcdcdc;transform:scaleX(0.8877);">No.</span>
<span id="t101" class="t" style="left:3.5px;transform-origin:0 50%;top:691.60px;font-size:7.6px;color:#dcdcdc;transform:scaleX(0.9118);">X:2013mil Y:1075mil</span>
<span id="t102" class="t" style="left:74px;transform-origin:0 50%;top:691.60px;font-size:7.6px;color:#dcdcdc;transform:scaleX(0.9231);">Grid: 1mil</span>
<span id="t103" class="t" style="left:118px;transform-origin:0 50%;top:691.60px;font-size:7.6px;color:#dcdcdc;transform:scaleX(0.8843);">(Hotspot Snap (All Layers))</span>
<div style="left:82px;top:691px;width:0.8px;height:13px;background:#3c3c3c;"></div>
<div style="left:400px;top:691px;width:0.8px;height:13px;background:#3c3c3c;"></div>
<div style="left:1253px;top:693px;width:23.5px;height:10.2px;background:#464646;"></div>
<span id="t104" class="t" style="left:1255.05px;transform-origin:0 50%;top:692.40px;font-size:7.6px;color:#f0f0f0;transform:scaleX(0.8393);">Panels</span>
<svg style="left:0;top:0;" width="1280" height="720" viewBox="0 0 1280 720"><rect x="537.6" y="108.8" width="418.4" height="418.4" fill="none" stroke="#1b7f1b" stroke-width="2.6"/><defs><pattern id="hp" width="3" height="3" patternUnits="userSpaceOnUse" patternTransform="rotate(-45)"><rect width="3" height="3" fill="#000"/><rect width="1.1" height="3" fill="#6a0a6a"/></pattern></defs><rect x="597.9" y="169.2" width="22" height="22.6" fill="url(#hp)"/><rect x="874" y="169.2" width="22" height="22.6" fill="url(#hp)"/><rect x="597.9" y="446" width="22" height="22.6" fill="url(#hp)"/><rect x="874" y="446" width="22" height="22.6" fill="url(#hp)"/><rect x="594.8" y="166.3" width="304.1" height="304.6" fill="none" stroke="#ff00ff" stroke-width="6.2"/><rect x="629.10" y="200.00" width="235.40" height="236.00" rx="1" ry="1" fill="#800080"/><rect x="619.20" y="123.80" width="42.60" height="78.70" rx="21.3" ry="21.3" fill="#800080"/><rect x="619.20" y="434.00" width="42.60" height="78.70" rx="21.3" ry="21.3" fill="#800080"/><rect x="649.50" y="123.80" width="42.60" height="78.70" rx="21.3" ry="21.3" fill="#800080"/><rect x="649.50" y="434.00" width="42.60" height="78.70" rx="21.3" ry="21.3" fill="#800080"/><rect x="679.80" y="123.80" width="42.60" height="78.70" rx="21.3" ry="21.3" fill="#800080"/><rect x="679.80" y="434.00" width="42.60" height="78.70" rx="21.3" ry="21.3" fill="#800080"/><rect x="710.10" y="123.80" width="42.60" height="78.70" rx="21.3" ry="21.3" fill="#800080"/><rect x="710.10" y="434.00" width="42.60" height="78.70" rx="21.3" ry="21.3" fill="#800080"/><rect x="740.40" y="123.80" width="42.60" height="78.70" rx="21.3" ry="21.3" fill="#800080"/><rect x="740.40" y="434.00" width="42.60" height="78.70" rx="21.3" ry="21.3" fill="#800080"/><rect x="770.70" y="123.80" width="42.60" height="78.70" rx="21.3" ry="21.3" fill="#800080"/><rect x="770.70" y="434.00" width="42.60" height="78.70" rx="21.3" ry="21.3" fill="#800080"/><rect x="801.00" y="123.80" width="42.60" height="78.70" rx="21.3" ry="21.3" fill="#800080"/><rect x="801.00" y="434.00" width="42.60" height="78.70" rx="21.3" ry="21.3" fill="#800080"/><rect x="831.30" y="123.80" width="42.60" height="78.70" rx="21.3" ry="21.3" fill="#800080"/><rect x="831.30" y="434.00" width="42.60" height="78.70" rx="21.3" ry="21.3" fill="#800080"/><rect x="862.10" y="190.90" width="79.00" height="42.60" rx="21.3" ry="21.3" fill="#800080"/><rect x="552.40" y="190.90" width="79.00" height="42.60" rx="21.3" ry="21.3" fill="#800080"/><rect x="862.10" y="221.20" width="79.00" height="42.60" rx="21.3" ry="21.3" fill="#800080"/><rect x="552.40" y="221.20" width="79.00" height="42.60" rx="21.3" ry="21.3" fill="#800080"/><rect x="862.10" y="251.50" width="79.00" height="42.60" rx="21.3" ry="21.3" fill="#800080"/><rect x="552.40" y="251.50" width="79.00" height="42.60" rx="21.3" ry="21.3" fill="#800080"/><rect x="862.10" y="281.80" width="79.00" height="42.60" rx="21.3" ry="21.3" fill="#800080"/><rect x="552.40" y="281.80" width="79.00" height="42.60" rx="21.3" ry="21.3" fill="#800080"/><rect x="862.10" y="312.10" width="79.00" height="42.60" rx="21.3" ry="21.3" fill="#800080"/><rect x="552.40" y="312.10" width="79.00" height="42.60" rx="21.3" ry="21.3" fill="#800080"/><rect x="862.10" y="342.40" width="79.00" height="42.60" rx="21.3" ry="21.3" fill="#800080"/><rect x="552.40" y="342.40" width="79.00" height="42.60" rx="21.3" ry="21.3" fill="#800080"/><rect x="862.10" y="372.70" width="79.00" height="42.60" rx="21.3" ry="21.3" fill="#800080"/><rect x="552.40" y="372.70" width="79.00" height="42.60" rx="21.3" ry="21.3" fill="#800080"/><rect x="862.10" y="403.00" width="79.00" height="42.60" rx="21.3" ry="21.3" fill="#800080"/><rect x="552.40" y="403.00" width="79.00" height="42.60" rx="21.3" ry="21.3" fill="#800080"/><rect x="626.00" y="188.00" width="241.00" height="13.00" rx="0" ry="0" fill="#800080"/><rect x="626.00" y="435.00" width="241.00" height="13.00" rx="0" ry="0" fill="#800080"/><rect x="862.00" y="198.00" width="9.00" height="241.00" rx="0" ry="0" fill="#800080"/><rect x="622.00" y="198.00" width="9.00" height="241.00" rx="0" ry="0" fill="#800080"/><path d="M652.35 200.2 L655.65 196.6 L658.95 200.2 Z" fill="#2e002e"/><path d="M652.35 436.2 L655.65 439.8 L658.95 436.2 Z" fill="#2e002e"/><path d="M864.3 224.75 L867.7 227.35 L864.3 229.95 Z" fill="#2e002e"/><path d="M682.65 200.2 L685.95 196.6 L689.25 200.2 Z" fill="#2e002e"/><path d="M682.65 436.2 L685.95 439.8 L689.25 436.2 Z" fill="#2e002e"/><path d="M864.3 255.05 L867.7 257.65 L864.3 260.25 Z" fill="#2e002e"/><path d="M712.95 200.2 L716.25 196.6 L719.55 200.2 Z" fill="#2e002e"/><path d="M712.95 436.2 L716.25 439.8 L719.55 436.2 Z" fill="#2e002e"/><path d="M864.3 285.35 L867.7 287.95 L864.3 290.55 Z" fill="#2e002e"/><path d="M743.25 200.2 L746.55 196.6 L749.85 200.2 Z" fill="#2e002e"/><path d="M743.25 436.2 L746.55 439.8 L749.85 436.2 Z" fill="#2e002e"/><path d="M864.3 315.65 L867.7 318.25 L864.3 320.85 Z" fill="#2e002e"/><path d="M773.55 200.2 L776.85 196.6 L780.15 200.2 Z" fill="#2e002e"/><path d="M773.55 436.2 L776.85 439.8 L780.15 436.2 Z" fill="#2e002e"/><path d="M864.3 345.95 L867.7 348.55 L864.3 351.15 Z" fill="#2e002e"/><path d="M803.85 200.2 L807.15 196.6 L810.45 200.2 Z" fill="#2e002e"/><path d="M803.85 436.2 L807.15 439.8 L810.45 436.2 Z" fill="#2e002e"/><path d="M864.3 376.25 L867.7 378.85 L864.3 381.45 Z" fill="#2e002e"/><path d="M834.15 200.2 L837.45 196.6 L840.75 200.2 Z" fill="#2e002e"/><path d="M834.15 436.2 L837.45 439.8 L840.75 436.2 Z" fill="#2e002e"/><path d="M864.3 406.55 L867.7 409.15 L864.3 411.75 Z" fill="#2e002e"/><rect x="644.30" y="215.20" width="205.00" height="205.60" rx="0" ry="0" fill="#ff0000"/><rect x="634.70" y="139.30" width="11.60" height="47.70" rx="5.8" ry="5.8" fill="#ff0000"/><rect x="634.70" y="449.50" width="11.60" height="47.70" rx="5.8" ry="5.8" fill="#ff0000"/><rect x="665.00" y="139.30" width="11.60" height="47.70" rx="5.8" ry="5.8" fill="#ff0000"/><rect x="665.00" y="449.50" width="11.60" height="47.70" rx="5.8" ry="5.8" fill="#ff0000"/><rect x="695.30" y="139.30" width="11.60" height="47.70" rx="5.8" ry="5.8" fill="#ff0000"/><rect x="695.30" y="449.50" width="11.60" height="47.70" rx="5.8" ry="5.8" fill="#ff0000"/><rect x="725.60" y="139.30" width="11.60" height="47.70" rx="5.8" ry="5.8" fill="#ff0000"/><rect x="725.60" y="449.50" width="11.60" height="47.70" rx="5.8" ry="5.8" fill="#ff0000"/><rect x="755.90" y="139.30" width="11.60" height="47.70" rx="5.8" ry="5.8" fill="#ff0000"/><rect x="755.90" y="449.50" width="11.60" height="47.70" rx="5.8" ry="5.8" fill="#ff0000"/><rect x="786.20" y="139.30" width="11.60" height="47.70" rx="5.8" ry="5.8" fill="#ff0000"/><rect x="786.20" y="449.50" width="11.60" height="47.70" rx="5.8" ry="5.8" fill="#ff0000"/><rect x="816.50" y="139.30" width="11.60" height="47.70" rx="5.8" ry="5.8" fill="#ff0000"/><rect x="816.50" y="449.50" width="11.60" height="47.70" rx="5.8" ry="5.8" fill="#ff0000"/><rect x="846.80" y="139.30" width="11.60" height="47.70" rx="5.8" ry="5.8" fill="#ff0000"/><rect x="846.80" y="449.50" width="11.60" height="47.70" rx="5.8" ry="5.8" fill="#ff0000"/><rect x="877.60" y="206.40" width="48.00" height="11.60" rx="5.8" ry="5.8" fill="#ff0000"/><rect x="567.90" y="206.40" width="48.00" height="11.60" rx="5.8" ry="5.8" fill="#ff0000"/><rect x="877.60" y="236.70" width="48.00" height="11.60" rx="5.8" ry="5.8" fill="#ff0000"/><rect x="567.90" y="236.70" width="48.00" height="11.60" rx="5.8" ry="5.8" fill="#ff0000"/><rect x="877.60" y="267.00" width="48.00" height="11.60" rx="5.8" ry="5.8" fill="#ff0000"/><rect x="567.90" y="267.00" width="48.00" height="11.60" rx="5.8" ry="5.8" fill="#ff0000"/><rect x="877.60" y="297.30" width="48.00" height="11.60" rx="5.8" ry="5.8" fill="#ff0000"/><rect x="567.90" y="297.30" width="48.00" height="11.60" rx="5.8" ry="5.8" fill="#ff0000"/><rect x="877.60" y="327.60" width="48.00" height="11.60" rx="5.8" ry="5.8" fill="#ff0000"/><rect x="567.90" y="327.60" width="48.00" height="11.60" rx="5.8" ry="5.8" fill="#ff0000"/><rect x="877.60" y="357.90" width="48.00" height="11.60" rx="5.8" ry="5.8" fill="#ff0000"/><rect x="567.90" y="357.90" width="48.00" height="11.60" rx="5.8" ry="5.8" fill="#ff0000"/><rect x="877.60" y="388.20" width="48.00" height="11.60" rx="5.8" ry="5.8" fill="#ff0000"/><rect x="567.90" y="388.20" width="48.00" height="11.60" rx="5.8" ry="5.8" fill="#ff0000"/><rect x="877.60" y="418.50" width="48.00" height="11.60" rx="5.8" ry="5.8" fill="#ff0000"/><rect x="567.90" y="418.50" width="48.00" height="11.60" rx="5.8" ry="5.8" fill="#ff0000"/><circle cx="680.1" cy="251.2" r="15.2" fill="#c6c6c6"/><circle cx="680.1" cy="251.2" r="6.1" fill="#8b6a12"/><circle cx="680.1" cy="318" r="15.2" fill="#c6c6c6"/><circle cx="680.1" cy="318" r="6.1" fill="#8b6a12"/><circle cx="680.1" cy="385" r="15.2" fill="#c6c6c6"/><circle cx="680.1" cy="385" r="6.1" fill="#8b6a12"/><circle cx="746.75" cy="251.2" r="15.2" fill="#c6c6c6"/><circle cx="746.75" cy="251.2" r="6.1" fill="#8b6a12"/><circle cx="746.75" cy="318" r="15.2" fill="#c6c6c6"/><circle cx="746.75" cy="318" r="6.1" fill="#8b6a12"/><circle cx="746.75" cy="385" r="15.2" fill="#c6c6c6"/><circle cx="746.75" cy="385" r="6.1" fill="#8b6a12"/><circle cx="813.4" cy="251.2" r="15.2" fill="#c6c6c6"/><circle cx="813.4" cy="251.2" r="6.1" fill="#8b6a12"/><circle cx="813.4" cy="318" r="15.2" fill="#c6c6c6"/><circle cx="813.4" cy="318" r="6.1" fill="#8b6a12"/><circle cx="813.4" cy="385" r="15.2" fill="#c6c6c6"/><circle cx="813.4" cy="385" r="6.1" fill="#8b6a12"/><rect x="586" y="157.4" width="321.6" height="321.8" rx="1" fill="none" stroke="#ffff00" stroke-width="11.9" stroke-linejoin="round"/><circle cx="546.4" cy="166.4" r="15" fill="#ffff00"/></svg>
<div style="left:640px;top:63.2px;width:228.7px;height:16.2px;background:#3d3d3d;border-radius:2px;"></div>
<div style="left:531.7px;top:175.4px;width:216.7px;height:399.1px;background:#535353;"></div>
<div style="left:537.3px;top:193.5px;width:206px;height:355px;background:#3f3f3f;"></div>
<span id="t105" class="t" style="left:593.00px;transform-origin:0 50%;top:179.40px;font-size:7.8px;color:#e6e6e6;transform:scaleX(0.9305);">Silkscreen Preparation</span>
<div style="left:722px;top:175.4px;width:21.4px;height:13.6px;background:#a80f0f;"></div>
<svg style="left:729px;top:178.8px;" width="7" height="7" viewBox="0 0 7 7"><path d="M0.8 0.8 L6.2 6.2 M6.2 0.8 L0.8 6.2" stroke="#ffffff" stroke-width="1.4"/></svg>
<div style="left:548.5px;top:205.2px;width:184.2px;height:13.8px;background:#4d4d4d;box-shadow:0 0 0 0.8px #2c2c2c;border-radius:1px;"></div>
<div style="left:548.5px;top:205.2px;width:92px;height:13.8px;background:#5e81aa;"></div>
<div style="left:640.5px;top:205.2px;width:0.8px;height:13.8px;background:#2c2c2c;"></div>
<span id="t106" class="t" style="left:590.00px;transform-origin:0 50%;top:206.90px;font-size:7.6px;color:#f4f4f4;transform:scaleX(0.9464);">All</span>
<span id="t107" class="t" style="left:673.50px;transform-origin:0 50%;top:206.90px;font-size:7.6px;color:#ececec;transform:scaleX(0.8795);">Selected</span>
<span id="t108" class="t" style="left:548px;transform-origin:0 50%;top:227.60px;font-size:7.6px;color:#dedede;transform:scaleX(0.8860);">Overlay layers</span>
<div style="left:597.2px;top:226.3px;width:61.8px;height:12.8px;background:#505050;box-shadow:0 0 0 0.8px #2e2e2e;border-radius:1.5px;"></div>
<span id="t109" class="t" style="left:600.5px;transform-origin:0 50%;top:227.60px;font-size:7.6px;color:#ececec;transform:scaleX(0.9541);">Top &amp; Bottom</span>
<svg style="left:650px;top:231px;" width="6" height="4" viewBox="0 0 6 4"><path d="M0.3 0.3 H5.7 L3 3.4 Z" fill="#f4f4f4"/></svg>
<div style="left:548px;top:244.6px;width:185.5px;height:1px;background:#2a2a2a;"></div>
<div style="left:549.3px;top:252.6px;width:8px;height:8px;background:#555555;border-radius:1px;"></div>
<span id="t110" class="t" style="left:560.5px;transform-origin:0 50%;top:251.20px;font-size:7.6px;color:#e4e4e4;transform:scaleX(0.8638);">Use Design Rules</span>
<svg style="left:547.2px;top:269px;" width="10" height="10" viewBox="0 0 10 10"><circle cx="4.8" cy="4.8" r="4" fill="#4a4a4a" stroke="#d0d0d0" stroke-width="0.9"/><circle cx="4.8" cy="4.8" r="2.2" fill="#ffffff"/></svg>
<span id="t111" class="t" style="left:559.5px;transform-origin:0 50%;top:268.40px;font-size:7.6px;color:#e4e4e4;transform:scaleX(0.8915);">Clip to Exposed Copper</span>
<svg style="left:547.7px;top:283.2px;" width="9" height="9" viewBox="0 0 9 9"><circle cx="4.3" cy="4.3" r="3.2" fill="#4a4a4a"/></svg>
<span id="t112" class="t" style="left:559.5px;transform-origin:0 50%;top:281.90px;font-size:7.6px;color:#d8d8d8;transform:scaleX(0.9058);">Clip to Solder Mask Openings</span>
<div style="left:548.6px;top:300.6px;width:183.8px;height:148.2px;background:#383838;"></div>
<span id="t113" class="t" style="left:558px;transform-origin:0 50%;top:304.00px;font-size:7.6px;color:#dedede;transform:scaleX(0.8500);">Silkscreen Clearance</span>
<span id="t114" class="t" style="left:646px;transform-origin:0 50%;top:304.00px;font-size:7.6px;color:#dedede;transform:scaleX(0.9147);">Min Remaining Length</span>
<div style="left:558px;top:317px;width:75px;height:12.8px;background:#323232;border-radius:1.5px;"></div>
<div style="left:645.4px;top:317px;width:75px;height:12.8px;background:#323232;border-radius:1.5px;"></div>
<span id="t115" class="t" style="left:561.5px;transform-origin:0 50%;top:317.80px;font-size:7.6px;color:#e4e4e4;transform:scaleX(0.9260);">5.9055mil</span>
<span id="t116" class="t" style="left:649px;transform-origin:0 50%;top:317.80px;font-size:7.6px;color:#e4e4e4;transform:scaleX(0.9260);">5.9055mil</span>
<svg style="left:0;top:0;" width="1280" height="720" viewBox="0 0 1280 720"><rect x="579.3" y="356" width="130" height="70.5" fill="#5f9c4e"/><circle cx="641" cy="356.6" r="1.6" fill="#2c3a28"/><circle cx="645" cy="356.6" r="1.6" fill="#2c3a28"/><circle cx="649.5" cy="356.6" r="1.6" fill="#2c3a28"/><circle cx="579.8" cy="371" r="1.6" fill="#2c3a28"/><circle cx="579.8" cy="376" r="1.6" fill="#2c3a28"/><circle cx="579.8" cy="381" r="1.6" fill="#2c3a28"/><path d="M607.6 380.2 H596.4 Q594.2 380.2 594.2 382.4 V397 M594.2 410 V440.4 H693.4 V410 M693.4 397 V382.4 Q693.4 380.2 691.2 380.2 H680.5" fill="none" stroke="#f0f0f0" stroke-width="1.1"/><path d="M623.6 380.2 H628.6 M641.4 380.2 H646.4 M659.2 380.2 H664.2" stroke="#f0f0f0" stroke-width="1.1"/><rect x="612.8" y="371.5" width="9" height="17.2" rx="2.4" fill="#e3b63a"/><rect x="630.5" y="371.5" width="9" height="17.2" rx="2.4" fill="#e3b63a"/><rect x="648.3" y="371.5" width="9" height="17.2" rx="2.4" fill="#e3b63a"/><rect x="666" y="371.5" width="9" height="17.2" rx="2.4" fill="#e3b63a"/><circle cx="594.7" cy="403.3" r="5.6" fill="#262626"/><circle cx="693.4" cy="403.3" r="5.6" fill="#262626"/><path d="M571.5 337 V392.5 M565 393.2 H593 M565 397.8 H593 M571.5 398.5 V410" stroke="#f0f0f0" stroke-width="0.9" fill="none"/><path d="M569.6 389.5 L571.5 392.8 L573.4 389.5 M569.6 401.5 L571.5 398.2 L573.4 401.5" stroke="#f0f0f0" stroke-width="0.8" fill="none"/><path d="M607.6 337 V380 M612 342 V372 M595.6 348.3 H607.6 M612 348.3 H624" stroke="#f0f0f0" stroke-width="0.9" fill="none"/><path d="M604.4 346.4 L607.3000000000001 348.3 L604.4 350.2 M615.2 346.4 L612.3 348.3 L615.2 350.2" stroke="#f0f0f0" stroke-width="0.8" fill="none"/><path d="M659.6 337 V380 M663.6 342 V372 M647.6 348.3 H659.6 M663.6 348.3 H675.6" stroke="#f0f0f0" stroke-width="0.9" fill="none"/><path d="M656.4 346.4 L659.3000000000001 348.3 L656.4 350.2 M666.8000000000001 346.4 L663.9 348.3 L666.8000000000001 350.2" stroke="#f0f0f0" stroke-width="0.8" fill="none"/><path d="M643 441 L643 449.6 L645 447.8 L646.4 450.8 L647.6 450.2 L646.2 447.4 L648.8 447.2 Z" fill="#ffffff" stroke="#202020" stroke-width="0.6"/></svg>
<span id="t117" class="t" style="left:620.15px;transform-origin:0 50%;top:414.80px;font-size:9.2px;color:#f2f2f2;transform:scaleX(0.8669);">Board Shape</span>
<div style="left:549.2px;top:455px;width:8px;height:8px;background:#555555;border-radius:1px;"></div>
<span id="t118" class="t" style="left:560.5px;transform-origin:0 50%;top:453.80px;font-size:7.6px;color:#e4e4e4;transform:scaleX(0.9139);">Move Text</span>
<span id="t119" class="t" style="left:548px;transform-origin:0 50%;top:472.20px;font-size:7.6px;color:#dedede;transform:scaleX(0.8940);">Fill &amp; Region</span>
<div style="left:605.3px;top:471.7px;width:49px;height:12.6px;background:#505050;box-shadow:0 0 0 0.8px #2e2e2e;border-radius:1.5px;"></div>
<span id="t120" class="t" style="left:608px;transform-origin:0 50%;top:473.00px;font-size:7.6px;color:#ececec;transform:scaleX(0.9088);">None</span>
<svg style="left:645px;top:476.3px;" width="6" height="4" viewBox="0 0 6 4"><path d="M0.3 0.3 H5.7 L3 3.4 Z" fill="#f4f4f4"/></svg>
<span id="t121" class="t" style="left:548px;transform-origin:0 50%;top:490.10px;font-size:7.6px;color:#dedede;transform:scaleX(0.8910);">Max Distance</span>
<div style="left:606.7px;top:489px;width:50px;height:12.6px;background:#2f2f2f;border-radius:1.5px;"></div>
<span id="t122" class="t" style="left:610px;transform-origin:0 50%;top:489.80px;font-size:7.6px;color:#e4e4e4;transform:scaleX(0.9385);">200mil</span>
<div style="left:548px;top:507.4px;width:185.5px;height:1px;background:#2a2a2a;"></div>
<div style="left:549.2px;top:515px;width:8px;height:8px;background:#555555;border-radius:1px;"></div>
<span id="t123" class="t" style="left:560.5px;transform-origin:0 50%;top:513.40px;font-size:7.6px;color:#e4e4e4;transform:scaleX(0.8807);">Delete Silksreen Outside Board Shape</span>
<div style="left:549.2px;top:529.8px;width:8px;height:8px;background:#555555;border-radius:1px;"></div>
<span id="t124" class="t" style="left:560.5px;transform-origin:0 50%;top:528.20px;font-size:7.6px;color:#e4e4e4;transform:scaleX(0.9023);">Clip Locked Components and Primitives</span>
<div style="left:646.9px;top:555px;width:45.4px;height:13px;background:#4a4a4a;box-shadow:0 0 0 0.8px #2e2e2e;border-radius:1.5px;"></div>
<div style="left:697.5px;top:555px;width:45.2px;height:13px;background:#4a4a4a;box-shadow:0 0 0 0.8px #2e2e2e;border-radius:1.5px;"></div>
<span id="t125" class="t" style="left:664.75px;transform-origin:0 50%;top:556.40px;font-size:7.6px;color:#f0f0f0;transform:scaleX(0.8649);">OK</span>
<span id="t126" class="t" style="left:710.25px;transform-origin:0 50%;top:556.40px;font-size:7.6px;color:#f0f0f0;transform:scaleX(0.8249);">Cancel</span>
<svg style="left:0;top:0;" width="1280" height="720" viewBox="0 0 1280 720"><path d="M646.4 68.2 H653 L650.6 70.8 V74.2 L648.8 74.2 V70.8 Z" fill="#f8f8f8"/><path d="M663.8 68.6 H667.4 A2.7 2.7 0 0 1 667.4 74 H663.8" fill="none" stroke="#e8b0b0" stroke-width="1.3"/><path d="M666 68.6 H667.4 A2.7 2.7 0 0 1 667.4 74 H666" fill="none" stroke="#c23c3c" stroke-width="1.3"/><path d="M662 68.6 H662.9 M662 71.3 H662.9 M662 74 H662.9" stroke="#f0f0f0" stroke-width="1.1"/><path d="M682 67.8 V74.8 M678.6 71.3 H680.8 M683.2 71.3 H685.4" stroke="#6a7494" stroke-width="0.9"/><path d="M687.6 78.4 H690 V76 Z" fill="#f4f4f4"/><rect x="695.3" y="68" width="7.2" height="6.8" fill="none" stroke="#76767c" stroke-width="0.9"/><path d="M703.6 78.4 H706 V76 Z" fill="#f4f4f4"/><path d="M711.2 74.6 V70.6 H713.2 V74.6 M713.6 74.6 V68.4 H715.8 V74.6 M716.2 74.6 V70.2 H718 V74.6 Z" fill="#b9c2d8"/><rect x="711" y="74" width="7.2" height="0.9" fill="#d8dcea"/><path d="M719.6 78.4 H722 V76 Z" fill="#f4f4f4"/><rect x="727.6" y="67.8" width="7" height="6.8" rx="0.8" fill="#f2f2f2"/><path d="M726.6 69.4 H735.6 M726.6 71.2 H735.6 M726.6 73 H735.6 M729.4 66.8 V75.6 M731.2 66.8 V75.6 M733 66.8 V75.6" stroke="#f2f2f2" stroke-width="0.8"/><path d="M735.6 78.4 H738 V76 Z" fill="#f4f4f4"/><path d="M743.6 74.6 L750 68.2 M744 68.4 H746.6" stroke="#c8a43a" stroke-width="1.1" fill="none"/><circle cx="750" cy="68.4" r="1" fill="#d8b648"/><path d="M751.6 78.4 H754 V76 Z" fill="#f4f4f4"/><path d="M759.6 74 C759.6 68 763 68 763.2 72 C763.4 68 766.8 68 766.8 74" fill="none" stroke="#7a8498" stroke-width="1.4"/><path d="M767.6 78.4 H770 V76 Z" fill="#f4f4f4"/><circle cx="778" cy="70.4" r="2.7" fill="none" stroke="#f0d81e" stroke-width="1.5"/><path d="M778 73 V75.6 M780.6 70.2 H783" stroke="#f0d81e" stroke-width="1.3"/><rect x="777.2" y="74.6" width="1.8" height="1.4" fill="#e8a860"/><path d="M783.6 78.4 H786 V76 Z" fill="#f4f4f4"/><path d="M791.2 74.2 V71 H794.6 V68.6 H798.8 V74.2 Z" fill="#cfe4f6"/><path d="M799.6 78.4 H802 V76 Z" fill="#f4f4f4"/><rect x="807.4" y="67.2" width="8.2" height="8.2" rx="0.6" fill="none" stroke="#6c6c6c" stroke-width="0.9"/><path d="M809.8 73.2 L813 69.8" stroke="#6c6c6c" stroke-width="0.9"/><path d="M815.6 78.4 H818 V76 Z" fill="#f4f4f4"/><path d="M823.6 67.6 V74.8 H830.6 V67.6 M825.6 72.6 V70 M828.6 72.6 V70 M825.6 71.3 H828.6" fill="none" stroke="#7d88a2" stroke-width="0.9"/><path d="M831.6 78.4 H834 V76 Z" fill="#f4f4f4"/><path d="M840.2 74.8 L842.8 67.6 L845.8 74.8" fill="none" stroke="#5578b8" stroke-width="1.2"/><path d="M847.6 78.4 H850 V76 Z" fill="#f4f4f4"/><path d="M856.2 74.4 L862.8 68.2" stroke="#5b7fb4" stroke-width="1.1"/><path d="M864.0 78.4 H866.4 V76 Z" fill="#f4f4f4"/></svg>
</body></html>
